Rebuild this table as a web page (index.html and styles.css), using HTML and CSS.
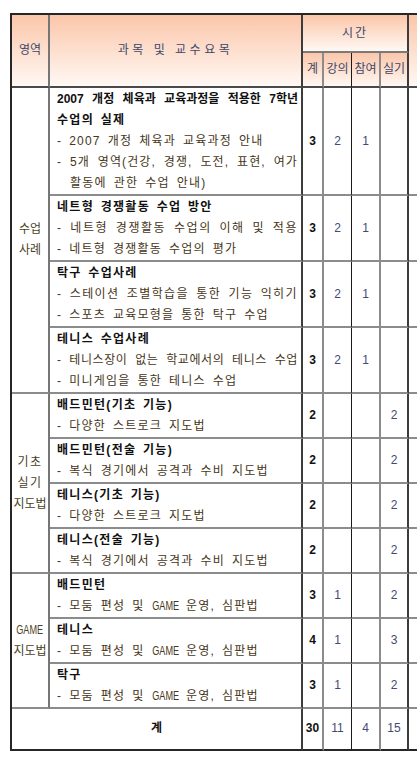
FILE: index.html
```html
<!DOCTYPE html>
<html lang="ko">
<head>
<meta charset="utf-8">
<title>과목 및 교수요목</title>
<link rel="stylesheet" href="styles.css">
</head>
<body>
<div class="page">
<table class="curri">
  <colgroup>
    <col class="w1"><col class="w2"><col class="w3"><col class="w4"><col class="w5"><col class="w6"><col class="w7">
  </colgroup>
  <thead>
    <tr>
      <th class="c1 h-span" rowspan="2">영역</th>
      <th class="c2 h-span h-subj" rowspan="2">과목 및 교수요목</th>
      <th class="c6 h-top" colspan="4">시간</th>
      <th class="c7 h-span" rowspan="2"></th>
    </tr>
    <tr>
      <th class="c3 h-sub">계</th>
      <th class="c4 h-sub">강의</th>
      <th class="c5 h-sub">참여</th>
      <th class="c6 h-sub">실기</th>
    </tr>
  </thead>
  <tbody>
    <tr>
      <td class="c1 area" rowspan="4">수업<br>사례</td>
      <td class="c2 subj">
        <div class="ln t full ft">2007 개정 체육과 교육과정을 적용한 7학년</div>
        <div class="ln t">수업의 실제</div>
        <div class="ln b">- 2007 개정 체육과 교육과정 안내</div>
        <div class="ln b full fd">- 5개 영역(건강, 경쟁, 도전, 표현, 여가</div>
        <div class="ln b cont">활동에 관한 수업 안내)</div>
      </td>
      <td class="c3 n">3</td><td class="c4 n">2</td><td class="c5 n">1</td><td class="c6 n"></td><td class="c7"></td>
    </tr>
    <tr>
      <td class="c2 subj">
        <div class="ln t">네트형 경쟁활동 수업 방안</div>
        <div class="ln b full fa">- 네트형 경쟁활동 수업의 이해 및 적용</div>
        <div class="ln b">- 네트형 경쟁활동 수업의 평가</div>
      </td>
      <td class="c3 n">3</td><td class="c4 n">2</td><td class="c5 n">1</td><td class="c6 n"></td><td class="c7"></td>
    </tr>
    <tr>
      <td class="c2 subj">
        <div class="ln t">탁구 수업사례</div>
        <div class="ln b full fb">- 스테이션 조별학습을 통한 기능 익히기</div>
        <div class="ln b">- 스포츠 교육모형을 통한 탁구 수업</div>
      </td>
      <td class="c3 n">3</td><td class="c4 n">2</td><td class="c5 n">1</td><td class="c6 n"></td><td class="c7"></td>
    </tr>
    <tr>
      <td class="c2 subj">
        <div class="ln t">테니스 수업사례</div>
        <div class="ln b full fc">- 테니스장이 없는 학교에서의 테니스 수업</div>
        <div class="ln b">- 미니게임을 통한 테니스 수업</div>
      </td>
      <td class="c3 n">3</td><td class="c4 n">2</td><td class="c5 n">1</td><td class="c6 n"></td><td class="c7"></td>
    </tr>
    <tr>
      <td class="c1 area" rowspan="4"><span class="sp">기초</span><br><span class="sp">실기</span><br>지도법</td>
      <td class="c2 subj">
        <div class="ln t">배드민턴(기초 기능)</div>
        <div class="ln b">- 다양한 스트로크 지도법</div>
      </td>
      <td class="c3 n">2</td><td class="c4 n"></td><td class="c5 n"></td><td class="c6 n">2</td><td class="c7"></td>
    </tr>
    <tr>
      <td class="c2 subj">
        <div class="ln t">배드민턴(전술 기능)</div>
        <div class="ln b">- 복식 경기에서 공격과 수비 지도법</div>
      </td>
      <td class="c3 n">2</td><td class="c4 n"></td><td class="c5 n"></td><td class="c6 n">2</td><td class="c7"></td>
    </tr>
    <tr>
      <td class="c2 subj">
        <div class="ln t">테니스(기초 기능)</div>
        <div class="ln b">- 다양한 스트로크 지도법</div>
      </td>
      <td class="c3 n">2</td><td class="c4 n"></td><td class="c5 n"></td><td class="c6 n">2</td><td class="c7"></td>
    </tr>
    <tr>
      <td class="c2 subj">
        <div class="ln t">테니스(전술 기능)</div>
        <div class="ln b">- 복식 경기에서 공격과 수비 지도법</div>
      </td>
      <td class="c3 n">2</td><td class="c4 n"></td><td class="c5 n"></td><td class="c6 n">2</td><td class="c7"></td>
    </tr>
    <tr>
      <td class="c1 area" rowspan="3"><span class="game">GAME</span><br>지도법</td>
      <td class="c2 subj">
        <div class="ln t">배드민턴</div>
        <div class="ln b">- 모둠 편성 및 <span class="game">GAME</span> 운영, 심판법</div>
      </td>
      <td class="c3 n">3</td><td class="c4 n">1</td><td class="c5 n"></td><td class="c6 n">2</td><td class="c7"></td>
    </tr>
    <tr>
      <td class="c2 subj">
        <div class="ln t">테니스</div>
        <div class="ln b">- 모둠 편성 및 <span class="game">GAME</span> 운영, 심판법</div>
      </td>
      <td class="c3 n">4</td><td class="c4 n">1</td><td class="c5 n"></td><td class="c6 n">3</td><td class="c7"></td>
    </tr>
    <tr>
      <td class="c2 subj">
        <div class="ln t">탁구</div>
        <div class="ln b">- 모둠 편성 및 <span class="game">GAME</span> 운영, 심판법</div>
      </td>
      <td class="c3 n">3</td><td class="c4 n">1</td><td class="c5 n"></td><td class="c6 n">2</td><td class="c7"></td>
    </tr>
    <tr class="sum">
      <td class="c2 sum-label" colspan="2">계</td>
      <td class="c3 n">30</td><td class="c4 n">11</td><td class="c5 n">4</td><td class="c6 n">15</td><td class="c7"></td>
    </tr>
  </tbody>
</table>
</div>
</body>
</html>
```
FILE: styles.css
```css
* { box-sizing: border-box; }
html, body { margin: 0; padding: 0; background: #fff; }
body { overflow: hidden; }

.page {
  width: 417px;
  height: 761px;
  overflow: hidden;
  padding: 13px 0 0 10px;
}

.curri {
  border-collapse: separate;
  border-spacing: 0;
  table-layout: fixed;
  width: 459px;
  border-left: 2px solid #262626;
  border-top: 2px solid #262626;
  font-family: "Liberation Sans", "Noto Sans CJK KR", sans-serif;
  font-size: 12px;
  line-height: 21px;
  color: #111;
}

.w1 { width: 38px; }
.w2 { width: 253px; }
.w3 { width: 21px; }
.w4 { width: 28px; }
.w5 { width: 29px; }
.w6 { width: 28px; }
.w7 { width: 60px; }

.curri th,
.curri td {
  padding: 0;
  border-bottom: 2px solid #8c8c8c;
  vertical-align: middle;
  text-align: center;
}

.curri .c1 { border-right: 2px solid #767676; }
.curri .c2 { border-right: 2px solid #3c3c3c; }
.curri .c3 { border-right: 2px solid #8c8c8c; }
.curri .c4 { border-right: 1px solid #1a1a1a; }
.curri .c5 { border-right: 2px solid #8c8c8c; }
.curri .c6 { border-right: 2px solid #3c3c3c; }

/* header */
.curri th {
  font-weight: normal;
  color: #3d4868;
  background: linear-gradient(#fbc6a9, #fff8f4);
}
.curri .h-span { border-bottom: 2px solid #4a4a4a; }
.curri .h-subj { letter-spacing: 3.5px; }
.curri .h-top {
  padding: 8px 0 7px;
  letter-spacing: 2px;
  border-bottom-color: #7a7a7a;
}
.curri .h-sub {
  padding: 6px 0;
  border-bottom: 2px solid #4a4a4a;
}

/* body */
.curri .area { color: #4a3f1f; }
.area .sp { letter-spacing: 1.5px; }

.curri .subj {
  text-align: left;
  padding: 1px 3px 0 7px;
}
.ln.full {
  white-space: nowrap;
  text-align: justify;
  text-align-last: justify;
}
.t { font-weight: bold; color: #111; letter-spacing: 1.3px; word-spacing: 2px; }
.t.ft { letter-spacing: 0; word-spacing: 1px; }
.b { color: #46361a; letter-spacing: 1.2px; word-spacing: 2.5px; }
.b.cont { padding-left: 13px; }
.b.fa { letter-spacing: 1.55px; }
.b.fb { letter-spacing: 1.4px; }
.b.fc { letter-spacing: 0.6px; }
.b.fd { letter-spacing: 1.1px; }

.game {
  display: inline-block;
  transform: scaleX(0.76);
  margin: 0 -4px;
  letter-spacing: 0;
  word-spacing: 0;
}

.curri .n { color: #3f4b73; }
.curri .n.c3 { font-weight: bold; color: #111; }

.curri .sum td {
  padding: 9px 0 10px;
  border-bottom: 2px solid #262626;
}
.curri .sum-label { font-weight: bold; color: #111; }
```
